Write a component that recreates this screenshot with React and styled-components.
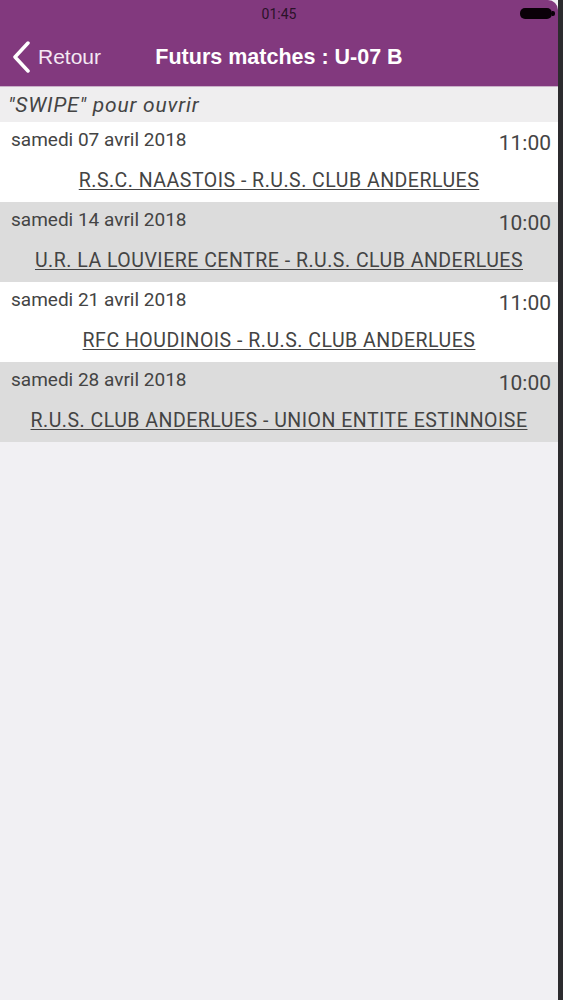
import React from 'react';
import styled, { createGlobalStyle } from 'styled-components';

const matches = [
  { date: 'samedi 07 avril 2018', time: '11:00', teams: 'R.S.C. NAASTOIS - R.U.S. CLUB ANDERLUES' },
  { date: 'samedi 14 avril 2018', time: '10:00', teams: 'U.R. LA LOUVIERE CENTRE - R.U.S. CLUB ANDERLUES' },
  { date: 'samedi 21 avril 2018', time: '11:00', teams: 'RFC HOUDINOIS - R.U.S. CLUB ANDERLUES' },
  { date: 'samedi 28 avril 2018', time: '10:00', teams: 'R.U.S. CLUB ANDERLUES - UNION ENTITE ESTINNOISE' },
];

export default function App() {
  return (
    <>
      <GlobalStyle />
      <Frame>
        <Screen>
          <Header>
            <StatusBar>
              <Clock>01:45</Clock>
              <Battery />
            </StatusBar>
            <NavBar>
              <BackButton>
                <svg width="20" height="32" viewBox="0 0 20 32">
                  <path d="M17 2 L4 16 L17 30" fill="none" stroke="#fff" strokeWidth="3.5" strokeLinecap="round" strokeLinejoin="round" />
                </svg>
                <span>Retour</span>
              </BackButton>
              <Title>Futurs matches : U-07 B</Title>
            </NavBar>
          </Header>
          <Hint>"SWIPE" pour ouvrir</Hint>
          {matches.map((m, i) => (
            <Row key={m.date} $alt={i % 2 === 1}>
              <RowTop>
                <DateText>{m.date}</DateText>
                <Time>{m.time}</Time>
              </RowTop>
              <Teams>{m.teams}</Teams>
            </Row>
          ))}
        </Screen>
        <Edge />
      </Frame>
    </>
  );
}

const GlobalStyle = createGlobalStyle`
  body {
    margin: 0;
    background: #f1f0f3;
  }
`;

const Frame = styled.div`
  display: flex;
  width: 563px;
  min-height: 1000px;
`;

const Screen = styled.div`
  flex: 1;
  display: flex;
  flex-direction: column;
  background: #f1f0f3;
  border-top-right-radius: 10px;
  overflow: hidden;
`;

const Edge = styled.div`
  width: 5px;
  background: #2c2b2e;
`;

const Header = styled.div`
  height: 87px;
  background: #82397e;
  display: flex;
  flex-direction: column;
  border-bottom: 1px solid #c9b0c8;
  box-sizing: border-box;
`;

const StatusBar = styled.div`
  position: relative;
  height: 28px;
  display: flex;
  align-items: center;
  justify-content: center;
`;

const Clock = styled.span`
  font-family: Roboto, sans-serif;
  font-size: 14px;
  color: #2a1229;
`;

const Battery = styled.div`
  position: absolute;
  right: 6px;
  top: 8px;
  width: 32px;
  height: 11px;
  background: #0a0008;
  border-radius: 5px;

  &::after {
    content: '';
    position: absolute;
    right: -3px;
    top: 3px;
    width: 3px;
    height: 5px;
    background: #0a0008;
    border-radius: 0 2px 2px 0;
  }
`;

const NavBar = styled.div`
  position: relative;
  flex: 1;
  display: flex;
  align-items: center;
  justify-content: center;
`;

const BackButton = styled.div`
  position: absolute;
  left: 11px;
  top: 13px;
  display: flex;
  align-items: center;
  gap: 7px;
  font-family: "Liberation Sans", Arial, sans-serif;
  font-size: 21px;
  color: #f4e8f3;
`;

const Title = styled.div`
  font-family: "Liberation Sans", Arial, sans-serif;
  font-weight: bold;
  font-size: 21.5px;
  color: #fff;
  margin-top: 1px;
`;

const Hint = styled.div`
  height: 35px;
  display: flex;
  align-items: center;
  padding-left: 8px;
  background: #efeeef;
  font-family: Roboto, sans-serif;
  font-style: italic;
  font-size: 21px;
  letter-spacing: 0.8px;
  color: #444;
`;

const Row = styled.div`
  height: 80px;
  display: flex;
  flex-direction: column;
  background: ${(p) => (p.$alt ? '#dcdcdc' : '#ffffff')};
  padding: 6px 7px 0 11px;
  box-sizing: border-box;
`;

const RowTop = styled.div`
  display: flex;
  justify-content: space-between;
  align-items: flex-start;
  height: 30px;
`;

const DateText = styled.span`
  font-family: Roboto, sans-serif;
  font-size: 19px;
  color: #444;
`;

const Time = styled.span`
  font-family: Roboto, sans-serif;
  font-size: 21px;
  color: #444;
  margin-top: 3px;
`;

const Teams = styled.div`
  text-align: center;
  font-family: Roboto, sans-serif;
  font-size: 19.5px;
  letter-spacing: 0.5px;
  color: #444;
  text-decoration: underline;
  text-underline-offset: 2px;
  margin-top: 11px;
  padding-right: 4px;
`;
